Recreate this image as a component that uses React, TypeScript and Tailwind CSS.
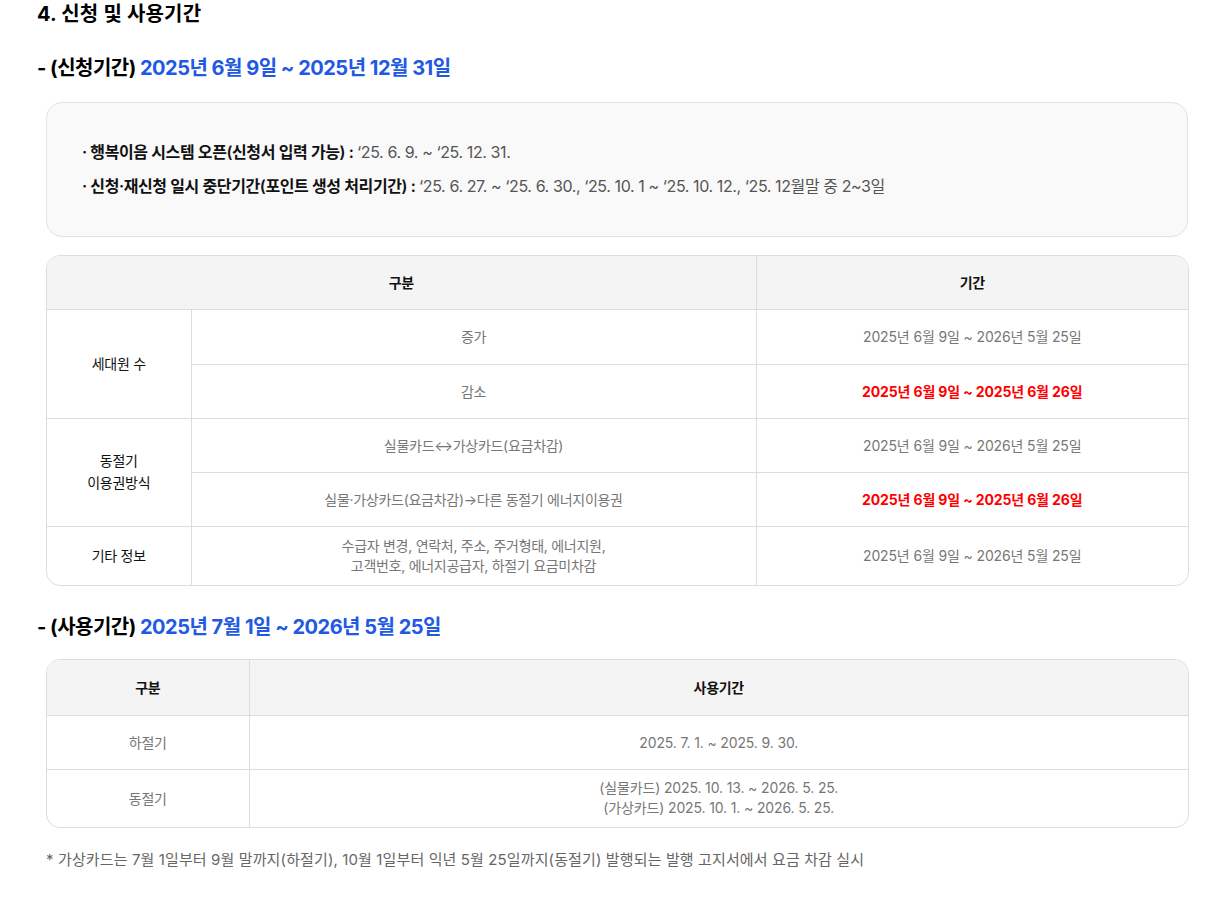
import React from "react";

const F = { fontFamily: 'Inter, "Noto Sans CJK KR", sans-serif' };

const td = "border-[#dddddd] text-center align-middle";

export default function App() {
  return (
    <div className="bg-white min-h-[900px] text-black" style={F}>
      <div className="pl-[37px] pr-[30px]">
        <h2 className="text-[20px] font-bold leading-[28px] tracking-[0.01em]">4. 신청 및 사용기간</h2>
        <h3 className="mt-[26px] text-[20px] font-bold leading-[28px] tracking-[-0.025em]">
          - (신청기간) <span className="text-[#2259e3]">2025년 6월 9일 ~ 2025년 12월 31일</span>
        </h3>
        <div className="ml-[9px] mt-[20px] w-[1142px] h-[135px] rounded-[16px] border border-[#e2e2e2] bg-[#f9f9f9] pl-[35px] pt-[37px] text-[16px] tracking-[-0.025em] leading-[24px]">
          <p>
            <span className="font-semibold text-[#111]">· 행복이음 시스템 오픈(신청서 입력 가능) : </span>
            <span className="text-[#555]">‘25. 6. 9. ~ ‘25. 12. 31.</span>
          </p>
          <p className="mt-[10px]">
            <span className="font-semibold text-[#111]">· 신청·재신청 일시 중단기간(포인트 생성 처리기간) : </span>
            <span className="text-[#555]">‘25. 6. 27. ~ ‘25. 6. 30., ‘25. 10. 1 ~ ‘25. 10. 12., ‘25. 12월말 중 2~3일</span>
          </p>
        </div>

        <div className="ml-[9px] mt-[18px] w-[1143px] rounded-[14px] border border-[#dddddd] overflow-hidden">
          <table className="w-full border-collapse text-[14px] tracking-[-0.02em]">
            <colgroup>
              <col className="w-[144px]" />
              <col className="w-[565px]" />
              <col />
            </colgroup>
            <tbody>
              <tr className="h-[53px] bg-[#f4f4f4]">
                <td colSpan={2} className={`${td} border-r border-b font-semibold text-[#111]`}>구분</td>
                <td className={`${td} border-b font-semibold text-[#111]`}>기간</td>
              </tr>
              <tr className="h-[55px]">
                <td rowSpan={2} className={`${td} border-r border-b text-[#111]`}>세대원 수</td>
                <td className={`${td} border-r border-b text-[#777]`}>증가</td>
                <td className={`${td} border-b tracking-[-0.01em] text-[#777]`}>2025년 6월 9일 ~ 2026년 5월 25일</td>
              </tr>
              <tr className="h-[54px]">
                <td className={`${td} border-r border-b text-[#777]`}>감소</td>
                <td className={`${td} border-b tracking-[-0.01em] font-bold text-[#ff0000]`}>2025년 6월 9일 ~ 2025년 6월 26일</td>
              </tr>
              <tr className="h-[54px]">
                <td rowSpan={2} className={`${td} border-r border-b text-[#111] leading-[22px]`}>동절기<br />이용권방식</td>
                <td className={`${td} border-r border-b text-[#777]`}>실물카드↔가상카드(요금차감)</td>
                <td className={`${td} border-b tracking-[-0.01em] text-[#777]`}>2025년 6월 9일 ~ 2026년 5월 25일</td>
              </tr>
              <tr className="h-[54px]">
                <td className={`${td} border-r border-b text-[#777]`}>실물·가상카드(요금차감)→다른 동절기 에너지이용권</td>
                <td className={`${td} border-b tracking-[-0.01em] font-bold text-[#ff0000]`}>2025년 6월 9일 ~ 2025년 6월 26일</td>
              </tr>
              <tr className="h-[59px]">
                <td className={`${td} border-r text-[#111]`}>기타 정보</td>
                <td className={`${td} border-r text-[#777] leading-[20px]`}>수급자 변경, 연락처, 주소, 주거형태, 에너지원,<br />고객번호, 에너지공급자, 하절기 요금미차감</td>
                <td className={`${td} tracking-[-0.01em] text-[#777]`}>2025년 6월 9일 ~ 2026년 5월 25일</td>
              </tr>
            </tbody>
          </table>
        </div>

        <h3 className="mt-[27px] text-[20px] font-bold leading-[28px] tracking-[-0.025em]">
          - (사용기간) <span className="text-[#2259e3]">2025년 7월 1일 ~ 2026년 5월 25일</span>
        </h3>

        <div className="ml-[9px] mt-[18px] w-[1143px] rounded-[14px] border border-[#dddddd] overflow-hidden">
          <table className="w-full border-collapse text-[14px] tracking-[-0.02em]">
            <colgroup>
              <col className="w-[202px]" />
              <col />
            </colgroup>
            <tbody>
              <tr className="h-[55px] bg-[#f4f4f4]">
                <td className={`${td} border-r border-b font-semibold text-[#111]`}>구분</td>
                <td className={`${td} border-b font-semibold text-[#111]`}>사용기간</td>
              </tr>
              <tr className="h-[54px]">
                <td className={`${td} border-r border-b text-[#777]`}>하절기</td>
                <td className={`${td} border-b tracking-[-0.01em] text-[#777]`}>2025. 7. 1. ~ 2025. 9. 30.</td>
              </tr>
              <tr className="h-[58px]">
                <td className={`${td} border-r text-[#777]`}>동절기</td>
                <td className={`${td} tracking-[-0.01em] text-[#777] leading-[20px]`}>(실물카드) 2025. 10. 13. ~ 2026. 5. 25.<br />(가상카드) 2025. 10. 1. ~ 2026. 5. 25.</td>
              </tr>
            </tbody>
          </table>
        </div>

        <p className="ml-[9px] mt-[21px] text-[15px] text-[#666] leading-[22px] tracking-[0.008em]">
          * 가상카드는 7월 1일부터 9월 말까지(하절기), 10월 1일부터 익년 5월 25일까지(동절기) 발행되는 발행 고지서에서 요금 차감 실시
        </p>
      </div>
    </div>
  );
}
